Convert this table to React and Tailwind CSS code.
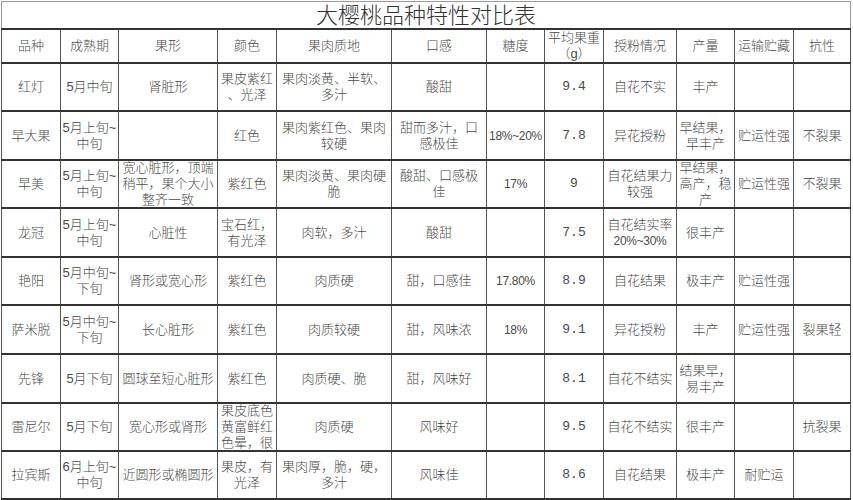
import React from "react";

const cols = [59, 58, 99, 59, 115, 95, 58, 59, 73, 58, 59, 57];

const headers = [
  ["品种"],
  ["成熟期"],
  ["果形"],
  ["颜色"],
  ["果肉质地"],
  ["口感"],
  ["糖度"],
  ["平均果重", "（g）"],
  ["授粉情况"],
  ["产量"],
  ["运输贮藏"],
  ["抗性"],
];

// each cell is a list of lines
const rows = [
  { h: "h-[48px]", cells: [["红灯"], ["5月中旬"], ["肾脏形"], ["果皮紫红", "、光泽"], ["果肉淡黄、半软、", "多汁"], ["酸甜"], [], ["9.4"], ["自花不实"], ["丰产"], [], []] },
  { h: "h-[49px]", cells: [["早大果"], ["5月上旬~", "中旬"], [], ["红色"], ["果肉紫红色、果肉", "较硬"], ["甜而多汁，口", "感极佳"], ["18%~20%"], ["7.8"], ["异花授粉"], ["早结果，", "早丰产"], ["贮运性强"], ["不裂果"]] },
  { h: "h-[48px]", cells: [["早美"], ["5月上旬~", "中旬"], ["宽心脏形，顶端", "稍平，果个大小", "整齐一致"], ["紫红色"], ["果肉淡黄、果肉硬", "脆"], ["酸甜、口感极", "佳"], ["17%"], ["9"], ["自花结果力", "较强"], ["早结果，", "高产，稳", "产"], ["贮运性强"], ["不裂果"]] },
  { h: "h-[49px]", cells: [["龙冠"], ["5月上旬~", "中旬"], ["心脏性"], ["宝石红，", "有光泽"], ["肉软，多汁"], ["酸甜"], [], ["7.5"], ["自花结实率", "20%~30%"], ["很丰产"], [], []] },
  { h: "h-[48px]", cells: [["艳阳"], ["5月中旬~", "下旬"], ["肾形或宽心形"], ["紫红色"], ["肉质硬"], ["甜，口感佳"], ["17.80%"], ["8.9"], ["自花结果"], ["极丰产"], ["贮运性强"], []] },
  { h: "h-[49px]", cells: [["萨米脱"], ["5月中旬~", "下旬"], ["长心脏形"], ["紫红色"], ["肉质较硬"], ["甜，风味浓"], ["18%"], ["9.1"], ["异花授粉"], ["丰产"], ["贮运性强"], ["裂果轻"]] },
  { h: "h-[49px]", cells: [["先锋"], ["5月下旬"], ["圆球至短心脏形"], ["紫红色"], ["肉质硬、脆"], ["甜，风味好"], [], ["8.1"], ["自花不结实"], ["结果早，", "易丰产"], [], []] },
  { h: "h-[48px]", cells: [["雷尼尔"], ["5月下旬"], ["宽心形或肾形"], ["果皮底色", "黄富鲜红", "色晕，很"], ["肉质硬"], ["风味好"], [], ["9.5"], ["自花不结实"], ["很丰产"], [], ["抗裂果"]] },
  { h: "h-[48px]", cells: [["拉宾斯"], ["6月上旬~", "中旬"], ["近圆形或椭圆形"], ["果皮，有", "光泽"], ["果肉厚，脆，硬，", "多汁"], ["风味佳"], [], ["8.6"], ["自花结果"], ["极丰产"], ["耐贮运"], []] },
];

const Lines = ({ lines, mono }) => (
  <div className={mono ? "font-['Liberation_Mono',monospace]" : ""}>
    {lines.map((l, i) => (
      <div
        key={i}
        className={l.includes("%") ? "whitespace-nowrap text-[12px] tracking-[-0.3px]" : "whitespace-nowrap"}
      >
        {l}
      </div>
    ))}
  </div>
);

export default function App() {
  return (
    <div className="w-[853px] h-[500px] bg-white pl-px pt-px overflow-hidden font-['Liberation_Sans','Noto_Sans_CJK_SC',sans-serif] font-light text-[#4a4a4a]">
      <table className="table-fixed border-collapse w-[849px] text-[13px] leading-[16px]">
        <colgroup>
          {cols.map((w, i) => (
            <col key={i} style={{ width: w }} />
          ))}
        </colgroup>
        <tbody>
          <tr className="h-[27px]">
            <td
              colSpan={12}
              className="border border-[#9a9a9a] border-b-2 border-b-[#333] text-center text-[22px] leading-[24px] pt-[2px] text-[#333]"
            >
              大樱桃品种特性对比表
            </td>
          </tr>
          <tr className="h-[33px]">
            {headers.map((h, i) => (
              <td
                key={i}
                className="border-x border-x-[#555] border-y-2 border-y-[#333] text-center align-middle overflow-hidden p-0"
              >
                <Lines lines={h} />
              </td>
            ))}
          </tr>
          {rows.map((r, ri) => (
            <tr key={ri} className={r.h}>
              {r.cells.map((c, ci) => (
                <td
                  key={ci}
                  className="border-x border-x-[#555] border-y-2 border-y-[#333] text-center align-middle p-0"
                >
                  <div className="max-h-[46px] overflow-hidden flex items-center justify-center">
                    <Lines lines={c} mono={ci === 7} />
                  </div>
                </td>
              ))}
            </tr>
          ))}
        </tbody>
      </table>
    </div>
  );
}
